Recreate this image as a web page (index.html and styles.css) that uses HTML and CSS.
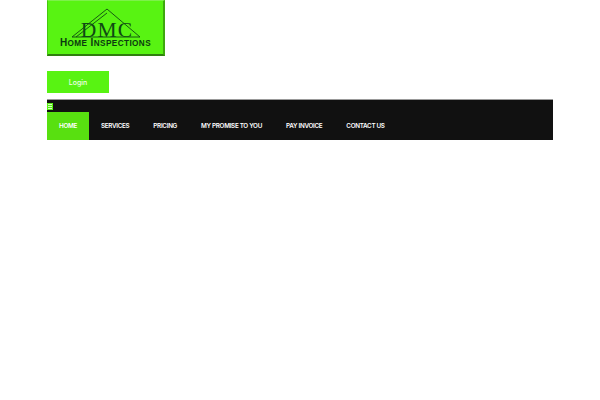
FILE: index.html
```html
<!DOCTYPE html>
<html lang="en">
<head>
<meta charset="utf-8">
<title>DMC Home Inspections</title>
<link rel="stylesheet" href="styles.css">
</head>
<body>
<div class="page">
  <a class="logo" href="#">
    <svg class="logo-art" viewBox="0 0 118 56" width="118" height="56" aria-label="DMC Home Inspections">
      <path class="roof" d="M25 37 L60 9 L93 37 Z M29 37 L60 13"/>
      <text class="dmc" x="60" y="37" text-anchor="middle">DMC</text>
      <text class="home" x="58.5" y="46" text-anchor="middle">H<tspan class="sc">OME</tspan> I<tspan class="sc">NSPECTIONS</tspan></text>
    </svg>
  </a>
  <a class="login" href="#">Login</a>
  <nav class="nav">
    <div class="burger"><span></span><span></span><span></span></div>
    <ul class="menu">
      <li class="active"><a href="#">HOME</a></li>
      <li><a href="#">SERVICES</a></li>
      <li><a href="#">PRICING</a></li>
      <li><a href="#">MY PROMISE TO YOU</a></li>
      <li><a href="#">PAY INVOICE</a></li>
      <li><a href="#">CONTACT US</a></li>
    </ul>
  </nav>
</div>
</body>
</html>
```
FILE: styles.css
```css
* { box-sizing: border-box; }
html, body { margin: 0; padding: 0; background: #fff; }
body { font-family: Inter, "Open Sans", sans-serif; }
a { text-decoration: none; color: inherit; }
.page { width: 506px; margin: 0 auto; display: flex; flex-direction: column; align-items: flex-start; }
.logo {
  display: block; width: 118px; height: 56px; background: #58f312;
  border-right: 2px solid #3ea80e; border-bottom: 2px solid #2f7f0e;
  border-left: 1px solid #45c80e; border-top: 1px solid #7df04a;
  overflow: hidden;
}
.logo-art { display: block; margin: -1px 0 0 -1px; }
.roof { fill: none; stroke: #0d4a12; stroke-width: 0.9; }
.dmc { font-family: "Liberation Serif", serif; font-size: 21.5px; fill: #0f4a14; letter-spacing: 1.2px; }
.home { font-family: "Liberation Sans", sans-serif; font-size: 10px; font-weight: 700; fill: #0b3a10; letter-spacing: 0.4px; }
.sc { font-size: 8.2px; }
.login {
  margin-top: 15px; padding-top: 1px; width: 62px; height: 22px; background: #58f312; color: #f0ffe8;
  font-size: 7px; font-weight: 500; display: flex; align-items: center; justify-content: center;
}
.nav { margin-top: 6px; width: 506px; height: 41px; background: #111; border-top: 1px solid #999; padding-top: 3px; }
.burger { width: 6px; height: 7px; background: #58f312; display: flex; flex-direction: column; justify-content: space-evenly; padding: 0 1px; }
.burger span { display: block; height: 1px; background: #d8f8c8; }
.menu { list-style: none; margin: 2px 0 0; padding: 0; display: flex; height: 28px; }
.menu li { display: flex; align-items: center; padding: 0 12px; color: #fff; font-size: 6.3px; font-weight: 600; letter-spacing: -0.3px; white-space: nowrap; }
.menu li.active { background: #58e010; }
```
